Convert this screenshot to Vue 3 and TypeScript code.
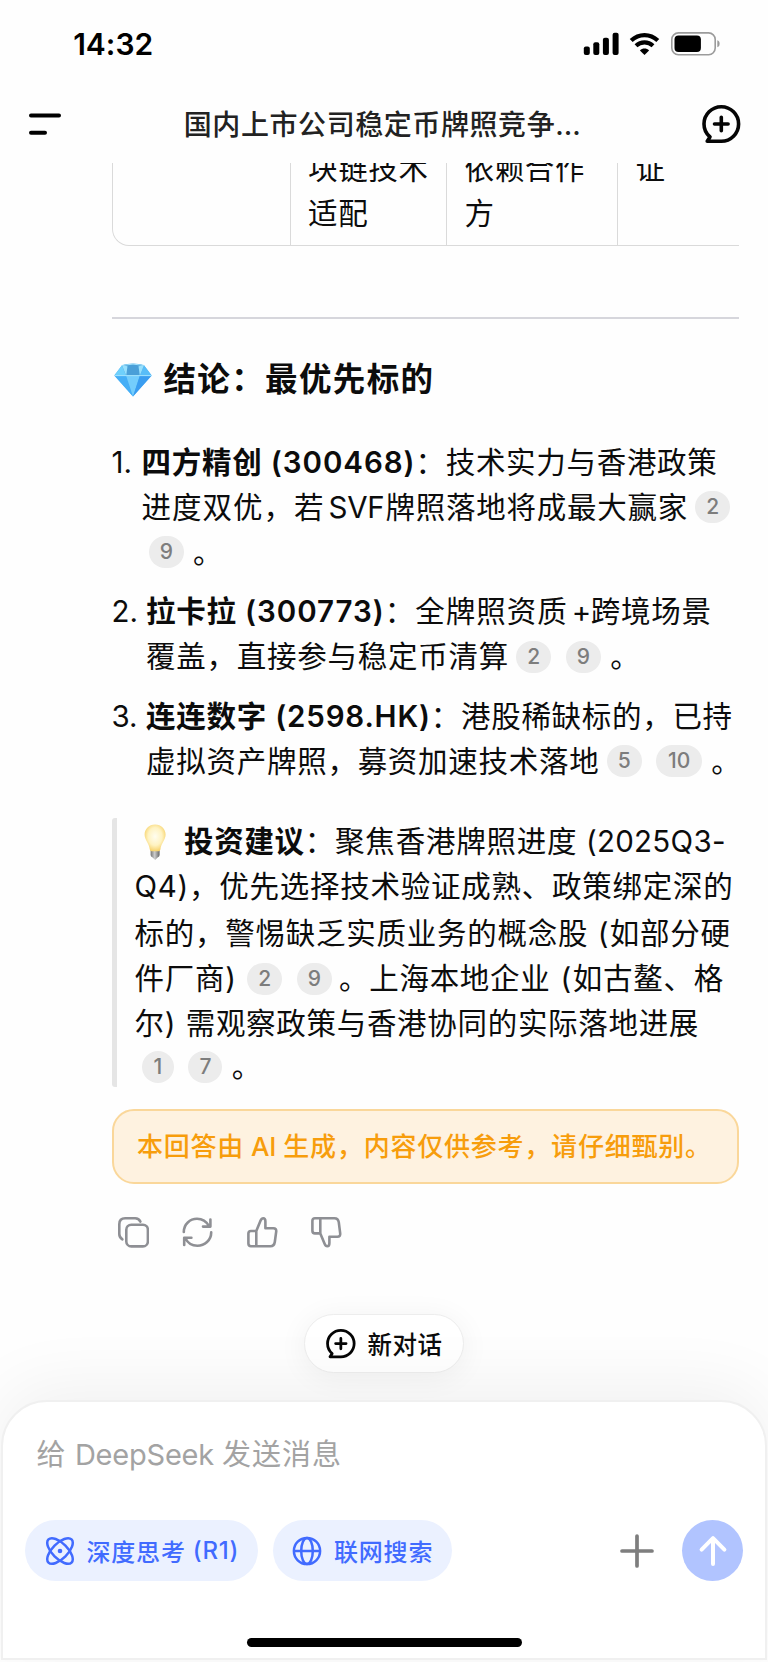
<script setup lang="ts">
import type { Directive } from 'vue'

interface Seg {
  t?: string
  w: number
  b?: boolean
  mid?: boolean
  ref?: string
  icon?: string
}
type Row = Seg[]

// Spreads the characters of a run evenly over the width it is given.
const vFit: Directive<HTMLElement, number> = {
  mounted(el, binding) {
    const count = (el.textContent ?? '').length
    el.style.width = 'auto'
    const natural = el.getBoundingClientRect().width
    el.style.letterSpacing = `${(binding.value - natural) / count}px`
    el.style.width = `${binding.value}px`
  },
}

const items: { n: string; indent: number; rows: Row[] }[] = [
  {
    n: '1.',
    indent: 30,
    rows: [
      [
        { t: '四方精创', w: 121, b: true },
        { t: ' (300468)', w: 153, b: true },
        { t: '：技术实力与香港政策', w: 302 },
      ],
      [
        { t: '进度双优，若', w: 183 },
        { t: 'SVF', w: 56, mid: true },
        { t: '牌照落地将成最大赢家', w: 302.5 },
        { ref: '2', w: 35 },
      ],
      [{ ref: '9', w: 35 }, { t: '。', w: 30 }],
    ],
  },
  {
    n: '2.',
    indent: 34.5,
    rows: [
      [
        { t: '拉卡拉', w: 90.6, b: true },
        { t: ' (300773)', w: 148.2, b: true },
        { t: '：全牌照资质', w: 183 },
        { t: '+', w: 18, mid: true },
        { t: '跨境场景', w: 121 },
      ],
      [{ t: '覆盖，直接参与稳定币清算', w: 363 }, { ref: '2', w: 35 }, { ref: '9', w: 35 }, { t: '。', w: 30 }],
    ],
  },
  {
    n: '3.',
    indent: 34.5,
    rows: [
      [
        { t: '连连数字', w: 121, b: true },
        { t: ' (2598.HK)', w: 163.8, b: true },
        { t: '：港股稀缺标的，已持', w: 302 },
      ],
      [{ t: '虚拟资产牌照，募资加速技术落地', w: 453.5 }, { ref: '5', w: 35 }, { ref: '10', w: 45.5 }, { t: '。', w: 30 }],
    ],
  },
]

const advice: Row[] = [
  [
    { icon: 'bulb', w: 49.5 },
    { t: '投资建议', w: 120.8, b: true },
    { t: '：聚焦香港牌照进度', w: 272.5 },
    { t: ' (2025Q3-', w: 148.5 },
  ],
  [{ t: 'Q4)', w: 54.5 }, { t: '，优先选择技术验证成熟、政策绑定深的', w: 544.5 }],
  [{ t: '标的，警惕缺乏实质业务的概念股', w: 453.7 }, { t: ' (', w: 21.5 }, { t: '如部分硬', w: 121 }],
  [
    { t: '件厂商', w: 90.7 },
    { t: ')', w: 14.7 },
    { ref: '2', w: 35 },
    { ref: '9', w: 35 },
    { t: '。上海本地企业', w: 211.4 },
    { t: ' (', w: 22.4 },
    { t: '如古鳌、格', w: 151 },
  ],
  [{ t: '尔', w: 30.2 }, { t: ') ', w: 21 }, { t: '需观察政策与香港协同的实际落地进展', w: 513.4 }],
  [{ ref: '1', w: 32 }, { ref: '7', w: 34 }, { t: '。', w: 30 }],
]
</script>

<template>
  <div class="screen" lang="zh-CN">
    <div class="status">
      <span class="time" v-fit="80">14:32</span>
      <div class="sys">
        <svg class="signal" width="36" height="24" viewBox="0 0 36 24">
          <rect x="0.8" y="14.4" width="6" height="8.6" rx="2" />
          <rect x="10.3" y="10.3" width="6" height="12.7" rx="2" />
          <rect x="19.9" y="5.8" width="6" height="17.2" rx="2" />
          <rect x="29.6" y="0.8" width="6" height="22.2" rx="2" />
        </svg>
        <svg class="wifi" width="31" height="24" viewBox="0 0 31 24">
          <path d="M2.2 8.6C9.8 1.3 21.2 1.3 28.8 8.6" fill="none" stroke="#000" stroke-width="4.2" />
          <path d="M7 13.7C11.8 9.2 19.2 9.2 24 13.7" fill="none" stroke="#000" stroke-width="4.1" />
          <path d="M15.5 23L10.9 18.4C13.5 15.9 17.5 15.9 20.1 18.4Z" />
        </svg>
        <svg class="battery" width="50" height="24" viewBox="0 0 50 24">
          <rect x="0.8" y="0.9" width="43.4" height="21.8" rx="6.6" fill="none" stroke="#9b9b9b" stroke-width="1.6" />
          <rect x="3.5" y="3.5" width="26.4" height="16.6" rx="4" />
          <path d="M46.3 8.3C49.4 9.2 49.4 14.4 46.3 15.3Z" fill="#9b9b9b" />
        </svg>
      </div>
    </div>

    <header class="head">
      <svg width="36" height="24" viewBox="0 0 36 24">
        <path d="M3 3.6H31M3 20.8H17" stroke="#000" stroke-width="4" stroke-linecap="round" />
      </svg>
      <h1 class="title"><span v-fit="371.5">国内上市公司稳定币牌照竞争</span><span v-fit="31">…</span></h1>
      <svg class="bubble" width="39" height="39" viewBox="0 0 39 39">
        <path d="M19.3 36.2H5.2L8 32C4.2 28.8 2 24.2 2 19A17.3 17.2 0 1 1 19.3 36.2Z" />
        <path d="M19.3 12.2V25.8M12.5 19H26.1" />
      </svg>
    </header>

    <main class="chat">
      <div class="table">
        <div class="cell c1"></div>
        <div class="cell c2"><span v-fit="120.6">块链技术</span><span v-fit="60.3">适配</span></div>
        <div class="cell c3"><span v-fit="120.6">依赖合作</span><span v-fit="30">方</span></div>
        <div class="cell c4"><span v-fit="30">证</span></div>
      </div>

      <hr class="rule" />

      <h2 class="conclusion">
        <svg width="38" height="34" viewBox="0 0 38 34">
          <path d="M8 2.2Q19 -0.6 30 2.2L37.6 12.2L19 33.6L0.4 12.2Z" fill="#4db4f7" />
          <path d="M8 2.2L12.2 12.8H0.4Z" fill="#6fd0fb" />
          <path d="M30 2.2L25.8 12.8H37.6Z" fill="#58bdf8" />
          <path d="M8 2.2Q19 -0.6 30 2.2L25.8 12.8H12.2Z" fill="#4a9fd8" />
          <path d="M8 2.2L13.5 3.2L12.2 12.8ZM30 2.2L24.5 3.2L25.8 12.8Z" fill="#97e0fd" />
          <path d="M0.4 12.8H12.2L19 33.6Z" fill="#45aef6" />
          <path d="M12.2 12.8H25.8L19 33.6Z" fill="#74cdfc" />
          <path d="M25.8 12.8H37.6L19 33.6Z" fill="#3a9df0" />
          <path d="M0.8 12.6H37.2M8.2 2.4Q19 -0.2 29.8 2.4" stroke="#a4e4fd" stroke-width="1" fill="none" />
        </svg>
        <span v-fit="271">结论：最优先标的</span>
      </h2>

      <ol class="list">
        <li v-for="item in items" :key="item.n" class="item">
          <span class="num" :style="{ width: item.indent + 'px' }">{{ item.n }}</span>
          <div>
            <div v-for="(row, r) in item.rows" :key="r" class="row">
              <template v-for="(s, i) in row" :key="i">
                <span v-if="s.ref" class="ref" :style="{ width: s.w + 'px' }">{{ s.ref }}</span>
                <span v-else v-fit="s.w" class="seg" :class="{ bold: s.b, mid: s.mid, stop: s.t === '。' }">{{ s.t }}</span>
              </template>
            </div>
          </div>
        </li>
      </ol>

      <blockquote class="advice">
        <div v-for="(row, r) in advice" :key="r" class="row">
          <template v-for="(s, i) in row" :key="i">
            <svg v-if="s.icon" class="bulb" width="49.5" height="38" viewBox="0 0 49.5 38">
              <defs>
                <radialGradient id="glow" cx="50%" cy="45%" r="55%">
                  <stop offset="0" stop-color="#fffdf0" />
                  <stop offset="0.6" stop-color="#fff3c2" />
                  <stop offset="1" stop-color="#f7d36d" />
                </radialGradient>
                <linearGradient id="metal">
                  <stop offset="0" stop-color="#777" />
                  <stop offset="0.45" stop-color="#ccc" />
                  <stop offset="1" stop-color="#666" />
                </linearGradient>
              </defs>
              <path d="M15.6 26.5H24.6V32Q24.6 33.8 22.6 34.6L20.1 37L17.6 34.6Q15.6 33.8 15.6 32Z" fill="url(#metal)" />
              <path
                d="M20.1 1.4C26.3 1.4 30.6 5.9 30.6 11.6C30.6 17.2 26 20.5 25.4 26.6Q25.2 28.2 23.6 28.2H16.6Q15 28.2 14.8 26.6C14.2 20.5 9.6 17.2 9.6 11.6C9.6 5.9 13.9 1.4 20.1 1.4Z"
                fill="url(#glow)"
              />
            </svg>
            <span v-else-if="s.ref" class="ref" :style="{ width: s.w + 'px' }">{{ s.ref }}</span>
            <span v-else v-fit="s.w" class="seg" :class="{ bold: s.b, stop: s.t === '。' }">{{ s.t }}</span>
          </template>
        </div>
      </blockquote>

      <p class="notice">
        <span v-fit="107">本回答由</span><span v-fit="39.3"> AI </span><span v-fit="428.5">生成，内容仅供参考，请仔细甄别。</span>
      </p>

      <div class="actions">
        <svg viewBox="0 0 32 32">
          <path d="M23.4 5.6Q21.8 2.3 18.2 2.3H8.2Q2.3 2.3 2.3 8.2V18Q2.3 21.6 5.4 23.4" />
          <rect x="9.3" y="8.8" width="21.6" height="21.6" rx="5" />
        </svg>
        <svg viewBox="0 0 32 32">
          <path d="M2.8 16C2.8 8.2 9 2.8 16 2.8C21.4 2.8 25.6 5.8 28 10.2M29.4 3.6V10.6H22" />
          <path d="M30.2 16.4C30.2 24.2 23.6 29.7 16.4 29.7C11 29.7 6.6 26.8 4.4 22.2M3.2 29V21.8H10.4" />
        </svg>
        <svg viewBox="0 0 32 32">
          <path d="M10.3 30.2H5Q2.4 30.2 2.4 27.6V17.6Q2.4 15 5 15H10.3ZM10.3 15L14.6 4.6Q15.6 2.2 17.2 2.2Q19.4 2.2 19.4 5.4V12.2H27.4Q30.6 12.2 30.2 15.6L28.8 26Q28.2 30.2 24.4 30.2H10.3" />
        </svg>
        <svg viewBox="0 0 32 32">
          <path d="M10.3 2.2H5Q2.4 2.2 2.4 4.8V14.8Q2.4 17.4 5 17.4H10.3ZM10.3 17.4L14.6 27.8Q15.6 30.2 17.2 30.2Q19.4 30.2 19.4 27V20.8H27.4Q30.6 20.8 30.2 17.4L28.8 6.4Q28.2 2.2 24.4 2.2H10.3" />
        </svg>
      </div>

      <button class="newchat">
        <svg class="bubble" width="30" height="30" viewBox="0 0 39 39">
          <path d="M19.3 36.2H5.2L8 32C4.2 28.8 2 24.2 2 19A17.3 17.2 0 1 1 19.3 36.2Z" />
          <path d="M19.3 12.2V25.8M12.5 19H26.1" />
        </svg>
        <span v-fit="75">新对话</span>
      </button>
    </main>

    <footer class="composer">
      <div class="placeholder">
        <span v-fit="38.4">给 </span><span v-fit="147">DeepSeek </span><span v-fit="120">发送消息</span>
      </div>
      <div class="tools">
        <button class="chip think">
          <svg width="30" height="30" viewBox="0 0 30 30">
            <ellipse cx="15" cy="15" rx="16.3" ry="7.7" transform="rotate(45 15 15)" />
            <ellipse cx="15" cy="15" rx="16.3" ry="7.7" transform="rotate(-45 15 15)" />
            <circle cx="15" cy="15" r="2.3" class="dot" />
          </svg>
          <span v-fit="99.2">深度思考</span><span v-fit="53"> (R1)</span>
        </button>
        <button class="chip search">
          <svg width="30" height="30" viewBox="0 0 30 30">
            <circle cx="15" cy="15" r="13.1" />
            <ellipse cx="15" cy="15" rx="5.8" ry="13.1" />
            <path d="M2 15H28" />
          </svg>
          <span v-fit="99.2">联网搜索</span>
        </button>
        <svg class="plus" width="34" height="34" viewBox="0 0 34 34">
          <path d="M17 2V32M2 17H32" />
        </svg>
        <button class="send">
          <svg width="30" height="32" viewBox="0 0 30 32">
            <path d="M15 29V4M3.6 14.6L15 3.2L26.4 14.6" />
          </svg>
        </button>
      </div>
      <div class="home"></div>
    </footer>
  </div>
</template>

<style>
body {
  margin: 0;
  background: #fff;
}
</style>

<style scoped>
.screen {
  width: 768px;
  height: 1662px;
  overflow: hidden;
  display: flex;
  flex-direction: column;
  background: #fefefe;
  color: #0c0c0c;
  font-family: Inter, 'Noto Sans CJK SC', sans-serif;
  font-size: 29.5px;
}
.screen span {
  white-space: pre;
}
h1,
h2,
p,
ol,
blockquote {
  margin: 0;
  padding: 0;
}
button {
  font: inherit;
  border: 0;
  padding: 0;
}
svg {
  flex: none;
  display: block;
}

.status {
  height: 88px;
  flex: none;
  box-sizing: border-box;
  padding: 0 47.5px 0 73.2px;
  display: flex;
  align-items: center;
  justify-content: space-between;
  color: #000;
}
.time {
  font-size: 30px;
  font-weight: 600;
}
.sys {
  display: flex;
  align-items: center;
}
.wifi {
  margin: 0 11px 0 10px;
}

.head {
  height: 75px;
  flex: none;
  box-sizing: border-box;
  padding: 0 27px 3px 28px;
  display: flex;
  align-items: center;
  justify-content: space-between;
}
.title {
  display: flex;
  margin-left: 4px;
  padding-top: 1px;
  font-size: 28px;
  line-height: 40px;
  font-weight: 500;
  color: #222;
}
.bubble {
  fill: none;
  stroke: #050505;
  stroke-width: 3.6;
  stroke-linecap: round;
  stroke-linejoin: round;
}

.chat {
  height: 1237px;
  flex: none;
  overflow: hidden;
  display: flex;
  flex-direction: column;
  box-sizing: border-box;
  padding: 0 29px 0 111.5px;
}

.table {
  flex: none;
  height: 100px;
  box-sizing: border-box;
  margin-top: -17px;
  display: flex;
  border: 1px solid #dadada;
  border-top: 0;
  border-right: 0;
  border-bottom-left-radius: 17px;
}
.cell {
  box-sizing: border-box;
  display: flex;
  flex-direction: column;
  align-items: flex-start;
  line-height: 45px;
  padding-left: 17.5px;
  border-left: 1px solid #dadada;
}
.c1 {
  width: 177px;
  border-left: 0;
}
.c2 {
  width: 156.5px;
}
.c3 {
  width: 171px;
}

.rule {
  flex: none;
  width: 627.5px;
  height: 2px;
  margin: 71px 0 0;
  border: 0;
  background: #d6d6dc;
}

.conclusion {
  flex: none;
  margin-top: 36px;
  height: 50px;
  display: flex;
  align-items: center;
  gap: 11.5px;
  padding-left: 2.5px;
  font-size: 32.5px;
  font-weight: 600;
  line-height: 50px;
}

.list {
  list-style: none;
  margin-top: 34.5px;
  display: flex;
  flex-direction: column;
  gap: 14.5px;
}
.item {
  display: flex;
}
.num {
  flex: none;
  line-height: 45px;
}
.row {
  display: flex;
  align-items: center;
  height: 45px;
  line-height: 45px;
}
.seg {
  flex: none;
}
.bold {
  font-weight: 600;
}
.mid {
  margin: 0 1px 0 4px;
}
.stop {
  margin-left: 2px;
}
.ref {
  flex: none;
  height: 32px;
  line-height: 32px;
  margin: 0 7.3px;
  border-radius: 17px;
  background: #ececec;
  color: #7d7d7d;
  font-size: 21px;
  font-weight: 500;
  text-align: center;
}

.advice {
  margin-top: 34.5px;
  padding: 1px 0 1px 18px;
  border-left: 5.5px solid #e5e5e5;
  border-radius: 3px;
  height: 267px;
}
.advice .row:nth-child(3) {
  margin-top: 2px;
}
.advice .row:nth-child(6) {
  margin-top: -2px;
}

.notice {
  flex: none;
  box-sizing: border-box;
  width: 627.5px;
  height: 75px;
  margin-top: 22px;
  padding-left: 23.5px;
  display: flex;
  align-items: center;
  border: 2px solid #fad79a;
  border-radius: 22px;
  background: #fef2e0;
  color: #f79d0c;
  font-size: 26px;
  font-weight: 500;
  line-height: 40px;
}

.actions {
  flex: none;
  margin: 32px 0 0 5px;
  display: flex;
  gap: 32.5px;
}
.actions svg {
  width: 32px;
  height: 32px;
  fill: none;
  stroke: #8e8f94;
  stroke-width: 2.6;
  stroke-linejoin: round;
  stroke-linecap: round;
}

.newchat {
  flex: none;
  align-self: flex-start;
  margin: 66px 0 0 192.5px;
  width: 160px;
  height: 59px;
  box-sizing: border-box;
  border: 1px solid #ededed;
  border-radius: 30px;
  background: #fff;
  box-shadow: 0 4px 30px rgba(0, 0, 0, 0.06);
  display: flex;
  align-items: center;
  padding-left: 21px;
  gap: 11.5px;
  font-size: 24.5px;
  font-weight: 500;
  color: #0c0c0c;
}

.composer {
  flex: none;
  box-sizing: border-box;
  width: 766px;
  height: 260px;
  margin-left: 1px;
  border: 2px solid #f0f0f0;
  border-radius: 46px 46px 0 0;
  background: #fff;
  box-shadow: 0 -12px 70px rgba(0, 0, 0, 0.06);
  position: relative;
  display: flex;
  flex-direction: column;
}
.placeholder {
  margin: 32px 0 0 33.5px;
  height: 42px;
  line-height: 42px;
  display: flex;
  font-size: 29px;
  color: #a3a3a3;
}
.tools {
  margin-top: 44px;
  padding-left: 22px;
  display: flex;
  align-items: center;
  height: 61px;
}
.chip {
  height: 61px;
  border-radius: 31px;
  background: #ebf1ff;
  color: #416bff;
  display: flex;
  align-items: center;
  font-size: 24px;
  font-weight: 500;
}
.chip svg {
  fill: none;
  stroke: #416bff;
  stroke-width: 2.5;
}
.chip .dot {
  fill: #416bff;
  stroke: none;
}
.think {
  width: 233px;
  padding-left: 19.5px;
}
.think svg {
  margin-right: 12px;
}
.search {
  width: 179px;
  margin-left: 14.5px;
  padding-left: 19.5px;
}
.search svg {
  margin-right: 12px;
}
.plus {
  margin-left: 168px;
  fill: none;
  stroke: #7e7e7e;
  stroke-width: 3.7;
  stroke-linecap: round;
}
.send {
  width: 61px;
  height: 61px;
  margin-left: 28.5px;
  border-radius: 50%;
  background: #b1c4ff;
  display: flex;
  align-items: center;
  justify-content: center;
}
.send svg {
  fill: none;
  stroke: #fff;
  stroke-width: 4;
  stroke-linecap: round;
  stroke-linejoin: round;
}
.home {
  width: 275px;
  height: 9.5px;
  margin: 56.5px 0 0 244px;
  border-radius: 5px;
  background: #000;
}
</style>
